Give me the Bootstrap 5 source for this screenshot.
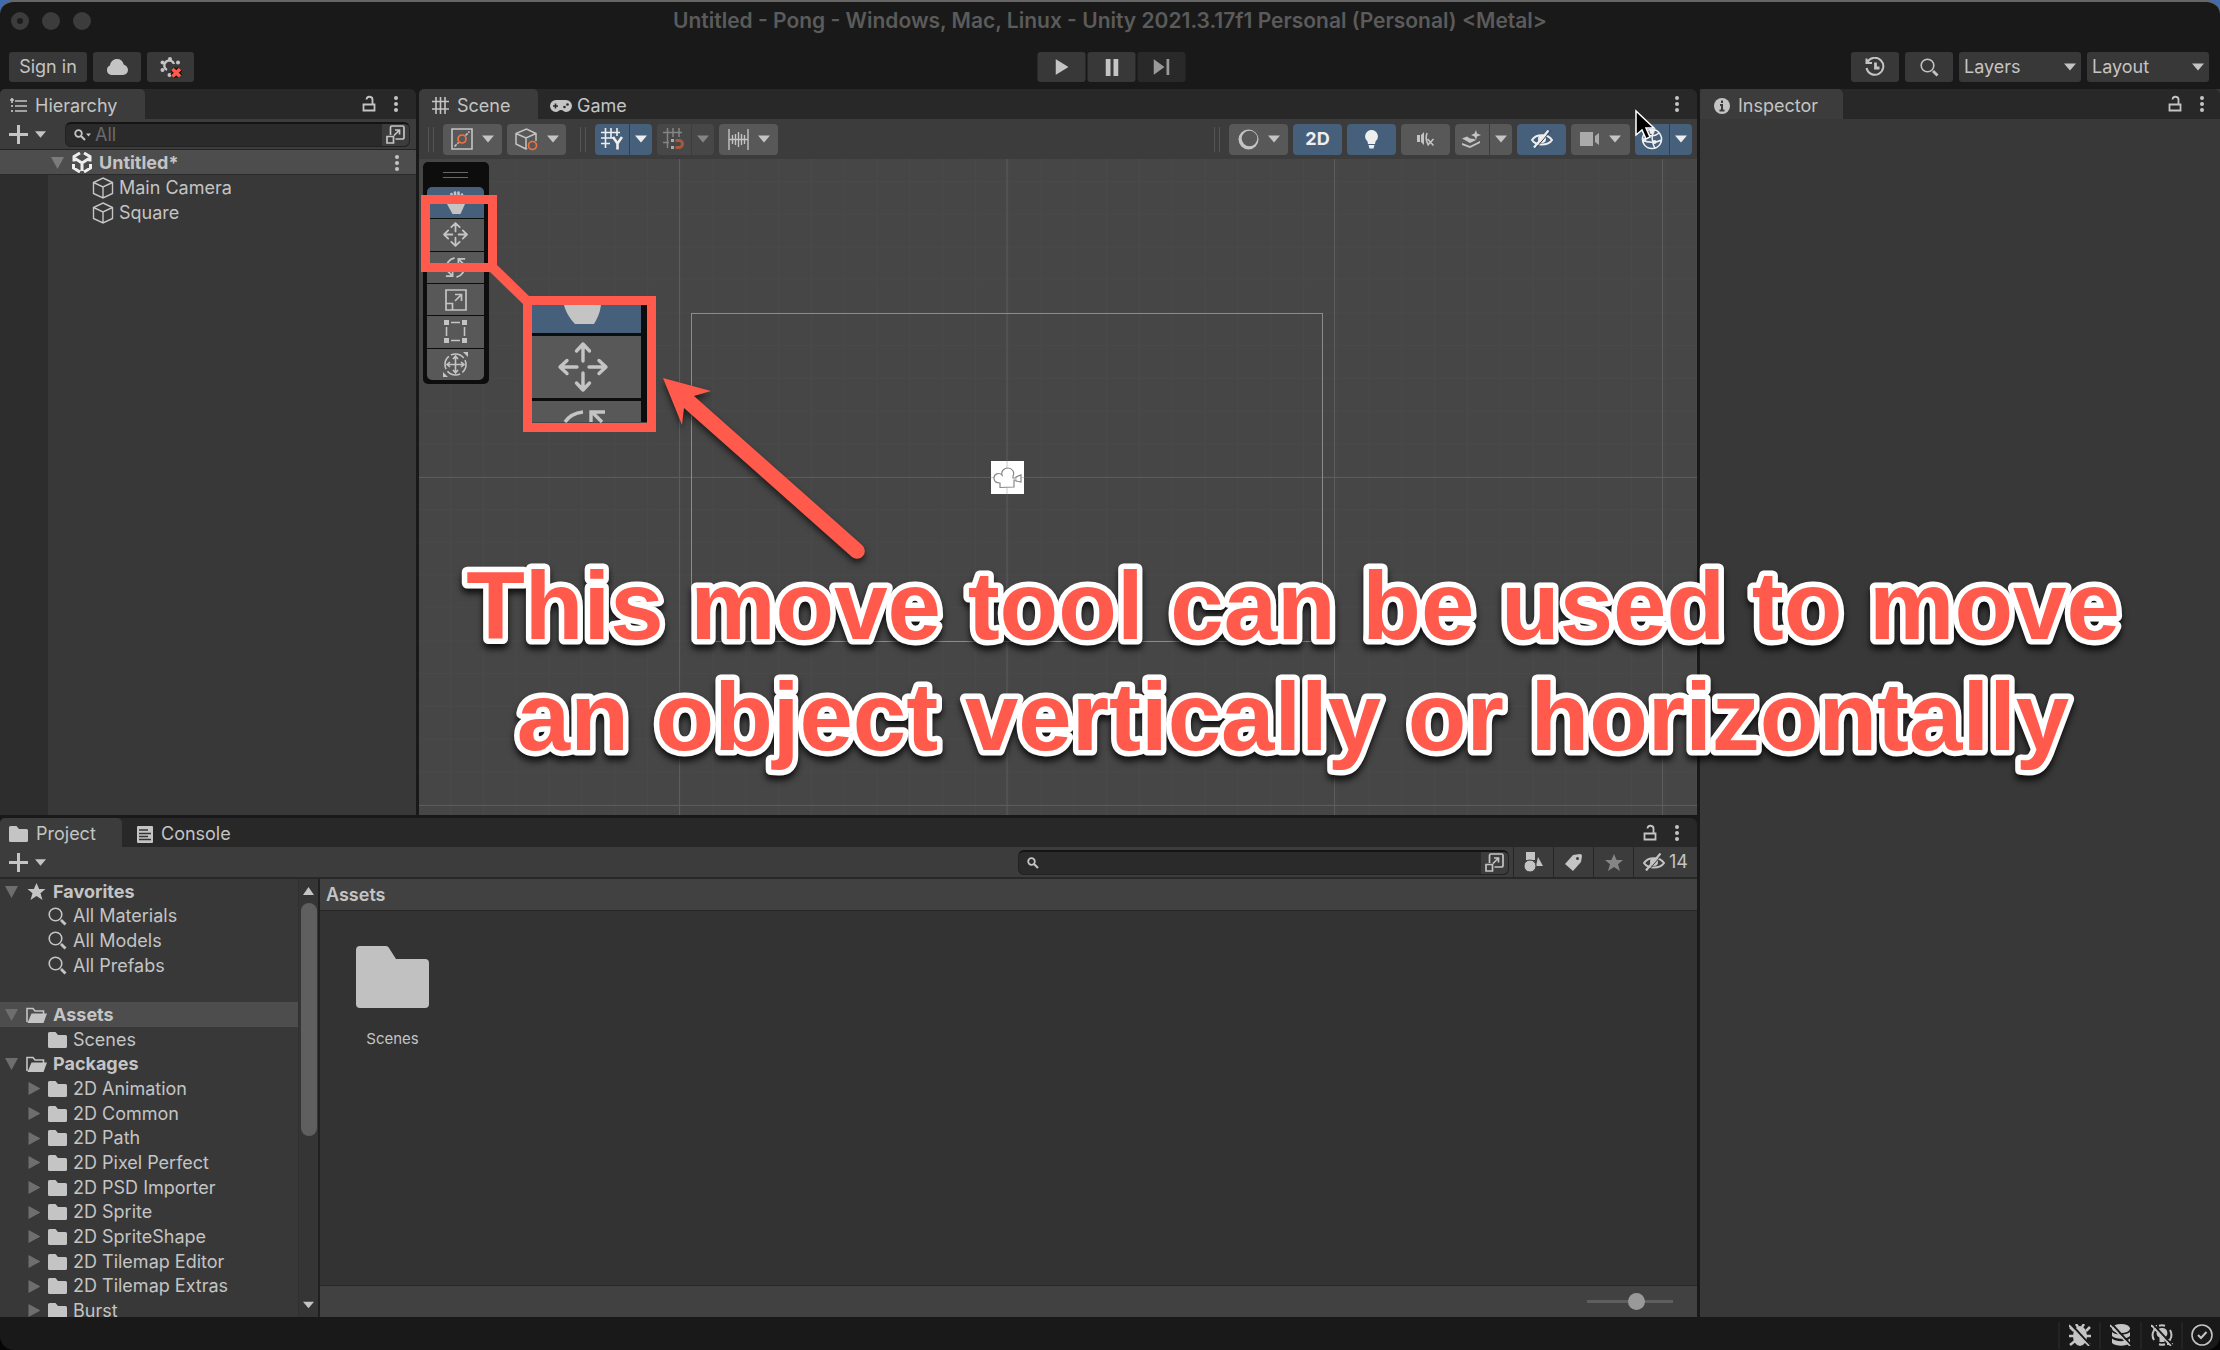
<!DOCTYPE html>
<html lang="en" data-bs-theme="dark">
<head>
<meta charset="utf-8">
<meta name="viewport" content="width=device-width, initial-scale=1">
<title>Untitled - Pong - Unity</title>
<link href="https://cdn.jsdelivr.net/npm/bootstrap@5.3.0/dist/css/bootstrap.min.css" rel="stylesheet">
<style>
:root { --line:#191919; --strip:#282828; --bar:#3c3c3c; --panel:#383838; --ink:#c4c4c4; --blue:#46607c; --mark:#ff5a4b; }
body { font-family: Inter, "Liberation Sans", sans-serif; font-size: 18px; line-height: 24px; color: var(--ink); background: linear-gradient(#3f6db0 50%, #050505 50%); overflow: hidden; }
button, select, input { font: inherit; color: inherit; }
svg { display: block; flex: none; }
.app-window { background: var(--line); border-top: 2px solid #666; border-radius: 14px; overflow: hidden; }
.title-strip { height: 42px; color: #5b5b5b; font-weight: 600; font-size: 21px; padding-bottom: 5px; }
.traffic { left: 11px; top: 10px; gap: 13px; }
.traffic i { width: 18px; height: 18px; border-radius: 50%; background: #3c3c3c; display: block; }
.traffic i:first-child { border: 6px solid #3c3c3c; background: #1d1d1d; }
.app-bar { height: 45px; padding: 8px 11px 7px 9px; }
.bar-set { gap: 6px; }
.play-set { gap: 2px; padding-left: 3px; }
.flat { border: 0; border-radius: 3px; background: #383838; display: flex; align-items: center; justify-content: center; height: 30px; padding: 0; }
.flat.dim { background: #292929; color: #999; }
.w46 { width: 47px; } .w48 { width: 48px; } .w78 { width: 78px; }
.pick { position: relative; width: 122px; }
.pick select { appearance: none; border: 0; border-radius: 3px; background: #383838; width: 100%; height: 30px; padding: 0 28px 0 5px; }
.pick svg { position: absolute; right: 5px; top: 11px; pointer-events: none; }
.split { gap: 3px; min-height: 0; min-width: 0; }
.tab-strip { height: 30px; background: var(--strip); border-radius: 6px 6px 0 0; flex: none; }
.tab-strip .pane-tab { color: inherit; text-decoration: none; height: 30px; display: flex; align-items: center; gap: 8px; padding-top: 3px; border-radius: 5px 5px 0 0; }
.pane-tab.on { background: var(--bar); }
.lower .tab-strip, .lower .pane-tab { height: 29px; }
.bare { border: 0; background: none; padding: 0; display: flex; align-items: center; justify-content: center; }
.bare.add { gap: 7px; }
.bare.more { margin: 0 17px; }
.side .bare.more { margin: 0 15px 0 17px; }
.hier { width: 416px; }
.side { width: 520px; background: var(--panel); }
.hier-bar { height: 31px; background: var(--bar); border-bottom: 1px solid #232323; padding: 0 6px 0 9px; gap: 19px; }
.finder { height: 25px; border-radius: 6px; background: #2a2a2a; border: 1px solid #222; border-top: 2px solid #141414; overflow: hidden; }
.finder input { border: 0; background: none; outline: 0; min-width: 0; padding: 0; height: 22px; }
.finder input::placeholder { color: #6b6b6b; opacity: 1; }
.finder .bare { width: 27px; background: var(--bar); align-self: stretch; }
.gutter { width: 48px; background: #2d2d2d; }
.root-row { height: 25px; background: #4d4d4d; border-bottom: 1px solid #2a2a2a; padding: 1px 16px 0 51px; font-weight: 700; }
.root-row .logo { margin: 0 7px 0 8px; }
.hier-list li { height: 25px; padding-left: 44px; gap: 5px; }
.scene-bar { height: 40px; background: var(--bar); padding: 0 5px 0 9px; gap: 5px; flex: none; }
.grip { width: 6px; height: 25px; border: solid #555; border-width: 0 1px; }
.tool { height: 31px; border: 0; border-radius: 4px; background: #585858; padding: 0; display: flex; align-items: center; justify-content: center; }
.tool.w { width: 59px; gap: 9px; }
.tool.m { width: 49px; }
.tool.l { width: 34px; border-radius: 4px 0 0 4px; }
.tool.r { width: 22px; border-radius: 0 4px 4px 0; margin-left: -4px; }
.tool.b { background: var(--blue); color: #eee; }
.tool.off { background: #474747; color: #858585; }
.tool.last { margin-right: 9px; }
.viewport { background: #464646; min-height: 0; }
.palette { left: 4px; top: 3px; width: 66px; padding: 10px 5px 4px 4px; background: #0d0d0d; border-radius: 5px; }
.palette hr { width: 25px; height: 6px; margin: 0 auto 9px; border: solid #686868; border-width: 1px 0; opacity: 1; }
.palette-grid { display: grid; grid-template-rows: repeat(6, 1fr); gap: 1px; height: 193px; border-radius: 5px; overflow: hidden; }
.palette-grid button { border: 0; padding: 0; background: #585858; display: flex; align-items: center; justify-content: center; }
.palette-grid .b { background: var(--blue); }
.lower { flex: 0 0 499px; min-height: 0; }
.proj-bar { height: 32px; background: var(--bar); border-bottom: 2px solid #282828; padding-left: 9px; flex: none; }
.proj-bar .finder { width: 491px; }
.proj-bar .cell { width: 40px; align-self: stretch; border-left: 1px solid #252525; }
.proj-bar .cell.wide { width: 64px; gap: 4px; }
.tree { width: 298px; background: var(--panel); overflow: hidden; }
.tree li { height: 25px; gap: 6px; padding-left: 5px; flex: none; }
.tree li:nth-child(3n+2) { height: 24px; }
.tree li.kid { padding-left: 48px; }
.tree li.pkg { padding-left: 28px; }
.tree li.top { font-weight: 700; }
.tree li.top .ar { margin-right: 2px; }
.tree li.sel { background: #4d4d4d; }
.tree .ar { color: #6e6e6e; }
.rail { width: 22px; background: #353535; border-left: 1px solid #303030; border-right: 2px solid #202020; padding: 8px 0; }
.rail .thumb { width: 16px; height: 233px; margin-top: 8px; border-radius: 8px; background: #5f5f5f; }
.crumbs { height: 32px; background: #414141; border-bottom: 1px solid #252525; padding-left: 6px; font-weight: 600; }
.files { background: #333; padding: 35px 0 0 22px; }
.file { width: 101px; font-size: 15px; }
.file svg { margin-bottom: 19px; }
.zoom-bar { height: 32px; background: #414141; border-top: 1px solid #282828; padding-right: 24px; }
.zoom-bar input { width: 86px; height: 17px; appearance: none; background: linear-gradient(#5e5e5e, #5e5e5e) center/100% 3px no-repeat; }
.zoom-bar input::-webkit-slider-thumb { appearance: none; width: 17px; height: 17px; border-radius: 50%; background: #999; }
.status { height: 33px; padding-top: 3px; }
.status .bare { width: 41px; height: 27px; border-left: 2px solid #232323; }
.status .bare:last-child { width: 39px; }
.overlay { left: 0; top: 0; pointer-events: none; z-index: 5; }
.callout { font: 700 96px "Liberation Sans", Arial, sans-serif; fill: var(--mark); stroke: #fff; stroke-width: 11px; stroke-linejoin: round; paint-order: stroke fill; text-anchor: middle; filter: drop-shadow(0 5px 3px rgba(0,0,0,.75)); }
</style>
<script src="https://cdn.jsdelivr.net/npm/bootstrap@5.3.0/dist/js/bootstrap.bundle.min.js"></script>
</head>
<body>
<svg width="0" height="0" class="position-absolute" aria-hidden="true">
  <symbol id="dn" viewBox="0 0 12 7"><path d="M0 0h12L6 7z" fill="currentColor"/></symbol>
  <symbol id="dots" viewBox="0 0 6 18"><g fill="currentColor"><circle cx="3" cy="3" r="2"/><circle cx="3" cy="9" r="2"/><circle cx="3" cy="15" r="2"/></g></symbol>
  <symbol id="lock" viewBox="0 0 14 18"><path d="M1.500 9.500h11v6h-11zM10.500 9V5a3 3 0 0 0-6-.5" fill="none" stroke="currentColor" stroke-width="1.800"/></symbol>
  <symbol id="plus" viewBox="0 0 19 19"><path d="M9.500 0v19M0 9.500h19" stroke="currentColor" stroke-width="3"/></symbol>
  <symbol id="mag" viewBox="0 0 19 19"><circle cx="7.500" cy="7.500" r="6.300" fill="none" stroke="currentColor" stroke-width="1.600"/><path d="M13 13l4.500 4.500" stroke="currentColor" stroke-width="2.800"/></symbol>
  <symbol id="smag" viewBox="0 0 12 12"><circle cx="4.500" cy="4.500" r="3.300" fill="none" stroke="currentColor" stroke-width="1.800"/><path d="M7 7l4 4" stroke="currentColor" stroke-width="2.200"/></symbol>
  <symbol id="popout" viewBox="0 0 19 19"><g fill="none" stroke="currentColor" stroke-width="1.700"><path d="M4.500 10V2.500a1.500 1.500 0 0 1 1.500-1.500h10.500a1.500 1.500 0 0 1 1.500 1.500v10a1.500 1.500 0 0 1-1.500 1.500H9.500M1 11.500h6.500V18H1zM8 10.500l5.500-5.500M9 5h4.500v4.500"/></g></symbol>
  <symbol id="cube" viewBox="0 0 22 22"><path d="M11 1l9.500 4.500v11L11 21l-9.500-4.500v-11zM1.500 5.500L11 10l9.500-4.500M11 10v11" fill="none" stroke="currentColor" stroke-width="1.400"/></symbol>
  <symbol id="folder" viewBox="0 0 19 16"><path d="M1.500 0h6L10 3h7.500A1.500 1.500 0 0 1 19 4.500v10a1.500 1.500 0 0 1-1.500 1.500h-16A1.500 1.500 0 0 1 0 14.500v-13A1.500 1.500 0 0 1 1.500 0z" fill="currentColor"/></symbol>
  <symbol id="open" viewBox="0 0 21 16"><path d="M1 15V1.500h6L9 4h8.500v3" fill="none" stroke="currentColor" stroke-width="1.600"/><path d="M5.500 6.500H21L17.500 16H1.500z" fill="currentColor"/></symbol>
  <symbol id="star" viewBox="0 0 18 17"><path d="M9 0l2.600 6H18l-5 4.200L15 17l-6-4-6 4 2-6.800L0 6h6.400z" fill="currentColor"/></symbol>
  <symbol id="ad" viewBox="0 0 13 12"><path d="M0 0h13L6.500 12z" fill="currentColor"/></symbol>
  <symbol id="arr" viewBox="0 0 13 13"><path d="M0 0v13l12-6.500z" fill="currentColor"/></symbol>
  <symbol id="hide" viewBox="0 0 22 18"><path d="M1 10c4-6.500 16-6.500 20 0-4 6-16 6-20 0z" fill="none" stroke="currentColor" stroke-width="2"/><circle cx="11" cy="9" r="4" fill="currentColor"/><path d="M3 17.500L17.500 .5" stroke="currentColor" stroke-width="2.200"/><path d="M5.500 17.500L20 .5" stroke="#3c3c3c" stroke-width="1"/></symbol>
  <symbol id="move" viewBox="0 0 24 24"><path d="M12 9V1.500M8 5l4-4 4 4M12 15v7.500M8 19l4 4 4-4M9 12H1.500M5 8l-4 4 4 4M15 12h7.500M19 8l4 4-4 4" fill="none" stroke="currentColor" stroke-width="1.700" stroke-linecap="round" stroke-linejoin="round"/></symbol>
  <symbol id="hand" viewBox="0 0 24 24"><g stroke="currentColor" stroke-width="2.600" stroke-linecap="round"><path d="M7.500 10V3M11 9V1.500M14.500 9V1.500M18 10V3.500"/></g><path d="M3 13h18l-4.500 10h-8z" fill="currentColor"/></symbol>
  <symbol id="rot" viewBox="0 0 24 24"><path d="M3 15C2 8 5.500 3.500 11 2M21 9c1 7-2.500 11.500-8 13M15 11V3h7M15.500 3.500l6 6M9 13v8H2M8.500 20.500l-6-6" fill="none" stroke="currentColor" stroke-width="1.800"/></symbol>
</svg>

<div class="app-window d-flex flex-column vh-100 position-relative">
  <div class="title-strip d-flex align-items-center justify-content-center position-relative">
    <div class="traffic position-absolute d-flex"><i></i><i></i><i></i></div>
    <span>Untitled - Pong - Windows, Mac, Linux - Unity 2021.3.17f1 Personal (Personal) &lt;Metal&gt;</span>
  </div>
  <header class="app-bar d-flex align-items-center position-relative">
    <div class="bar-set d-flex">
      <button class="flat w78">Sign in</button>
      <button class="flat w48" aria-label="Cloud"><svg width="22" height="16" viewBox="0 0 22 16"><path d="M5 16a5 5 0 0 1-1-9.500C4.500 2.500 7.500 0 11 0c3.500 0 6 2 6.700 5.500C20.500 6.500 22 8.500 22 11a5 5 0 0 1-5 5z" fill="currentColor"/></svg></button>
      <button class="flat w46" aria-label="Collaboration"><svg width="22" height="22" viewBox="0 0 22 22"><g fill="currentColor"><circle cx="10" cy="3" r="2"/><circle cx="2.500" cy="6.500" r="2"/><circle cx="18" cy="6.500" r="2"/><circle cx="2.500" cy="14" r="2"/><circle cx="9.500" cy="19" r="2"/></g><path d="M7 14a5 5 0 1 1 7-6" fill="none" stroke="currentColor" stroke-width="2.400"/><path d="M12.500 13l7.500 7.500m0-7.500l-7.500 7.500" stroke="#111" stroke-width="6"/><path d="M12.500 13l7.500 7.500m0-7.500l-7.500 7.500" stroke="#ff5a4b" stroke-width="3.600"/></svg></button>
    </div>
    <div class="play-set position-absolute start-50 translate-middle-x d-flex">
      <button class="flat w48" aria-label="Play"><svg width="13" height="16" viewBox="0 0 13 16"><path d="M0 0l13 8-13 8z" fill="currentColor"/></svg></button>
      <button class="flat w48" aria-label="Pause"><svg width="13" height="17" viewBox="0 0 13 17"><path d="M0 0h5v17H0zM8 0h5v17H8z" fill="currentColor"/></svg></button>
      <button class="flat w48 dim" aria-label="Step"><svg width="16" height="16" viewBox="0 0 16 16"><path d="M0 0l11 8-11 8zM13 0h3v16h-3z" fill="currentColor"/></svg></button>
    </div>
    <div class="bar-set d-flex ms-auto">
      <button class="flat w48" aria-label="History"><svg width="20" height="20" viewBox="0 0 20 20"><path d="M2.500 5a8.500 8.500 0 1 1-1 6M1.500 1.500V6H7" fill="none" stroke="currentColor" stroke-width="2"/><path d="M10.500 5.500v5.500h4" fill="none" stroke="currentColor" stroke-width="2.800"/></svg></button>
      <button class="flat w48" aria-label="Search"><svg width="19" height="19"><use href="#mag"/></svg></button>
      <div class="pick"><select aria-label="Layers"><option>Layers</option></select><svg width="12" height="8"><use href="#dn"/></svg></div>
      <div class="pick"><select aria-label="Layout"><option>Layout</option></select><svg width="12" height="8"><use href="#dn"/></svg></div>
    </div>
  </header>

  <main class="split d-flex flex-fill">
    <div class="split d-flex flex-column flex-fill">
      <div class="split d-flex flex-fill">
        <section class="hier d-flex flex-column flex-shrink-0">
          <div class="tab-strip d-flex align-items-center">
            <a href="#" class="pane-tab on" style="padding-left:10px;width:145px"><svg width="17" height="15" viewBox="0 0 17 15"><path d="M5 3h12M5 8h12M5 13h12M2 0v5M0 2h4M2 7v2M2 12v2" stroke="currentColor" stroke-width="1.700"/></svg>Hierarchy</a>
            <button class="bare ms-auto" aria-label="Lock"><svg width="14" height="18"><use href="#lock"/></svg></button>
            <button class="bare more" aria-label="Menu"><svg width="6" height="18"><use href="#dots"/></svg></button>
          </div>
          <div class="hier-bar d-flex align-items-center flex-shrink-0">
            <button class="bare add" aria-label="Create"><svg width="19" height="19"><use href="#plus"/></svg><svg width="11" height="7"><use href="#dn"/></svg></button>
            <div class="finder d-flex align-items-center flex-fill">
              <svg width="12" height="12" class="ms-2"><use href="#smag"/></svg><svg width="5" height="4"><use href="#dn"/></svg>
              <input class="flex-fill ms-1" placeholder="All" aria-label="Search hierarchy">
              <button class="bare" aria-label="Picker"><svg width="19" height="19"><use href="#popout"/></svg></button>
            </div>
          </div>
          <div class="root-row d-flex align-items-center flex-shrink-0">
            <svg width="13" height="12" style="color:#7b7b7b"><use href="#ad"/></svg>
            <svg class="logo" width="20" height="21" viewBox="0 0 20 21"><path d="M8 1L2 4.500v5M12 1l6 3.500v5M1.500 12v4L8 20M18.500 12v4L12 20M10 11v8M10 11L3 6.500M10 11l7-4.500M10 11" fill="none" stroke="#eee" stroke-width="3"/></svg>
            <span>Untitled*</span><svg class="ms-auto" width="6" height="18"><use href="#dots"/></svg>
          </div>
          <div class="d-flex flex-fill" style="background:var(--panel)">
            <div class="gutter"></div>
            <ul class="hier-list list-unstyled m-0">
              <li class="d-flex align-items-center"><svg width="22" height="22"><use href="#cube"/></svg>Main Camera</li>
              <li class="d-flex align-items-center"><svg width="22" height="22"><use href="#cube"/></svg>Square</li>
            </ul>
          </div>
        </section>

        <section class="d-flex flex-column flex-fill" style="min-width:0">
          <div class="tab-strip d-flex align-items-center">
            <a href="#" class="pane-tab on" style="padding-left:13px;width:119px"><svg width="17" height="17" viewBox="0 0 17 17"><path d="M4 0v17M8.500 0v17M13 0v17M0 4.500h17M0 12h17" stroke="currentColor" stroke-width="1.600"/></svg>Scene</a>
            <a href="#" class="pane-tab" style="padding-left:12px;gap:5px"><svg width="22" height="12" viewBox="0 0 22 12"><path d="M6 0h10a6 6 0 0 1 0 12c-2 0-3-2-5-2s-3 2-5 2A6 6 0 0 1 6 0z" fill="currentColor"/><path d="M3 6h5M5.500 3.500v5" stroke="#282828" stroke-width="1.600"/><circle cx="14.500" cy="7" r="1.300" fill="#282828"/><circle cx="17.500" cy="4.500" r="1.300" fill="#282828"/></svg>Game</a>
            <button class="bare more ms-auto" aria-label="Menu"><svg width="6" height="18"><use href="#dots"/></svg></button>
          </div>
          <div class="scene-bar d-flex align-items-center">
            <span class="grip me-1"></span>
            <button class="tool w" aria-label="Pivot"><svg width="22" height="22" viewBox="0 0 22 22"><path d="M1 1h20v20H1z" fill="none" stroke="currentColor" stroke-width="1.600"/><path d="M3.500 18.500l4-4M14.500 7.500l4-4" stroke="currentColor" stroke-width="1.600" stroke-dasharray="3 1"/><circle cx="11" cy="11" r="4" fill="none" stroke="#f0713f" stroke-width="1.700"/></svg><svg width="12" height="8"><use href="#dn"/></svg></button>
            <button class="tool w last" aria-label="Orientation"><svg width="23" height="23" viewBox="0 0 23 23"><path d="M12 20l-1 1-10-5V5.500L11.500 1 21 5.500V13M1 5.500L11 10l10-4.500M11 10v11" fill="none" stroke="currentColor" stroke-width="1.500"/><circle cx="17.500" cy="17.500" r="4" fill="none" stroke="#f0713f" stroke-width="1.700"/></svg><svg width="12" height="8"><use href="#dn"/></svg></button>
            <span class="grip me-1"></span>
            <button class="tool l b" aria-label="Grid"><svg width="22" height="22" viewBox="0 0 22 22"><path d="M4.500 0v20M10 0v10M16 0v8M0 4.500h19M0 10h12M0 15.500h9" stroke="currentColor" stroke-width="1.600"/><path d="M12 9l4.500 6.500L21 9M16.500 15v6.500" fill="none" stroke="currentColor" stroke-width="2.600"/></svg></button><button class="tool r b" aria-label="Grid menu"><svg width="12" height="8"><use href="#dn"/></svg></button>
            <button class="tool l off" aria-label="Snap"><svg width="22" height="22" viewBox="0 0 22 22"><path d="M4.500 0v20M10 0v9M16 0v9M0 4.500h19M0 14.500h6" stroke="currentColor" stroke-width="1.500"/><path d="M8 12.500h3M8 19.500h3" stroke="#aaa" stroke-width="3"/><path d="M12.500 12.500H16a3.500 3.500 0 0 1 0 7h-3.500" fill="none" stroke="#a8583e" stroke-width="3"/></svg></button><button class="tool r off" aria-label="Snap menu"><svg width="12" height="8"><use href="#dn"/></svg></button>
            <button class="tool w" aria-label="Increment"><svg width="21" height="21" viewBox="0 0 21 21"><path d="M1 0v21M20 0v21M10.500 3v15M4.500 6v9M7.500 5v11M13.500 5v11M16.500 6v9M1 10.500h19" stroke="currentColor" stroke-width="1.400"/></svg><svg width="12" height="8"><use href="#dn"/></svg></button>
            <span class="grip ms-auto me-1"></span>
            <button class="tool w" aria-label="Shading"><svg width="21" height="21" viewBox="0 0 21 21"><circle cx="10.500" cy="10.500" r="10" fill="currentColor"/><circle cx="11.500" cy="9.500" r="7.800" fill="#585858"/></svg><svg width="12" height="8"><use href="#dn"/></svg></button>
            <button class="tool m b fw-bold">2D</button>
            <button class="tool m b" aria-label="Light"><svg width="13" height="19" viewBox="0 0 13 19"><path d="M6.500 0a6.500 6.500 0 0 1 4 11.500L10 14H3l-.5-2.500A6.500 6.500 0 0 1 6.500 0zM3.500 15h6l-1 3.500h-4z" fill="currentColor"/></svg></button>
            <button class="tool m" aria-label="Audio"><svg width="18" height="16" viewBox="0 0 18 16"><path d="M0 4h3v7H0zM4 4l3-3v13l-3-3z" fill="currentColor"/><path d="M10 2c-1 3-1 8 1 11M10.500 8l6 6.500m0-6.500l-6 6.500" fill="none" stroke="currentColor" stroke-width="1.600"/></svg></button>
            <button class="tool l" aria-label="Effects"><svg width="20" height="18" viewBox="0 0 20 18"><path d="M0 8.500l5-2 3 2 4 .5 2 1-6 3zM0 13l8 3 10-5v2l-10 5-8-3zM14 0l1 3.500L19 5l-4 1.500L14 10l-1.500-3.500L9 5l3.500-1.500z" fill="currentColor"/></svg></button><button class="tool r" aria-label="Effects menu"><svg width="12" height="8"><use href="#dn"/></svg></button>
            <button class="tool m b" aria-label="Visibility"><svg width="22" height="18"><use href="#hide"/></svg></button>
            <button class="tool w" aria-label="Camera"><svg width="20" height="14" viewBox="0 0 20 14"><path d="M0 0h13v14H0zM15 4l4-3v12l-4-3z" fill="#aaa"/></svg><svg width="12" height="8"><use href="#dn"/></svg></button>
            <button class="tool l b" aria-label="Gizmos"><svg width="22" height="22" viewBox="0 0 22 22"><path d="M11 1.500a9.500 9.500 0 1 0 .01 0M1.500 12c5 3 14 3 19 0M13 1.500c-3 5-2 14 1 19M3 6c5 3 12 2 15-1" fill="none" stroke="currentColor" stroke-width="1.500"/><circle cx="11" cy="3.500" r="2.500" fill="currentColor"/><circle cx="3" cy="12" r="2" fill="currentColor"/><circle cx="13.500" cy="14" r="2" fill="currentColor"/></svg></button><button class="tool r b" aria-label="Gizmos menu"><svg width="12" height="8"><use href="#dn"/></svg></button>
          </div>
          <div class="viewport flex-fill position-relative overflow-hidden">
            <svg class="position-absolute" width="100%" height="100%">
              <defs><pattern id="minor" x="31" y="22" width="32.800" height="32.800" patternUnits="userSpaceOnUse"><path d="M.5 0v33M0 .5h33" stroke="#494949"/></pattern></defs>
              <rect width="100%" height="100%" fill="url(#minor)"/>
              <path d="M260.500 0v700M588 0v700M915.500 0v700M1243.500 0v700M0 318.500h1300M0 646.500h1300" stroke="#5c5c5c"/>
              <rect x="272.500" y="154.500" width="631" height="328" fill="none" stroke="#8b8b8b"/>
              <path d="M572 302h33v33h-33z" fill="#fff"/>
              <path d="M588 302v8M588 329v6M572 318.500h4M602 318.500h3" stroke="#ccc"/>
              <path d="M581 328.500V324c-4 0-6-2-6-5 0-4 5-6 8-3-1-4 2-7 6-7s7 4 5 8v2h3v-1l5-2v7l-5-1v-1h-2v7z" fill="#fff" stroke="#888" stroke-width="1.200"/>
            </svg>
            <div class="palette position-absolute">
              <hr>
              <div class="palette-grid">
                <button class="b" aria-label="Hand"><svg width="24" height="24"><use href="#hand"/></svg></button>
                <button aria-label="Move"><svg width="25" height="25"><use href="#move"/></svg></button>
                <button aria-label="Rotate"><svg width="23" height="23"><use href="#rot"/></svg></button>
                <button aria-label="Scale"><svg width="22" height="22" viewBox="0 0 22 22"><path d="M1 1h20v20H1zM1 14.500h6.500V21M10 12l6.500-6.500M10 5.500h6.500V12" fill="none" stroke="currentColor" stroke-width="1.700"/></svg></button>
                <button aria-label="Rect"><svg width="23" height="23" viewBox="0 0 23 23"><path d="M0 0h5v5H0zM18 0h5v5h-5zM0 18h5v5H0zM18 18h5v5h-5z" fill="currentColor"/><path d="M7 2.500h9M7 20.500h9M2.500 7v9M20.500 7v9" stroke="currentColor" stroke-width="1.600"/></svg></button>
                <button aria-label="Transform"><svg width="25" height="25" viewBox="0 0 25 25"><circle cx="12.500" cy="12.500" r="10.500" fill="none" stroke="currentColor" stroke-width="1.600" stroke-dasharray="14 2.500" stroke-dashoffset="5"/><path d="M12.500 4v17M4 12.500h17M10 7l2.500-3L15 7M10 18l2.500 3 2.500-3M7 10l-3 2.500L7 15M18 10l3 2.500-3 2.500" fill="none" stroke="currentColor" stroke-width="1.600"/><path d="M20 0h5v5zM0 20v5h5z" fill="currentColor"/></svg></button>
              </div>
            </div>
          </div>
        </section>
      </div>

      <section class="lower d-flex flex-column">
        <div class="tab-strip d-flex align-items-center">
          <a href="#" class="pane-tab on" style="padding-left:9px;width:122px"><svg width="19" height="16"><use href="#folder"/></svg>Project</a>
          <a href="#" class="pane-tab" style="padding-left:15px"><svg width="16" height="17" viewBox="0 0 16 17"><path d="M1 0h14a1 1 0 0 1 1 1v15a1 1 0 0 1-1 1H1a1 1 0 0 1-1-1V1a1 1 0 0 1 1-1z" fill="currentColor"/><path d="M2 4h9M2 7.500h12M2 10.500h9M2 13.500h12" stroke="#333" stroke-width="1.300"/></svg>Console</a>
          <button class="bare ms-auto" aria-label="Lock"><svg width="14" height="18"><use href="#lock"/></svg></button>
          <button class="bare more" aria-label="Menu"><svg width="6" height="18"><use href="#dots"/></svg></button>
        </div>
        <div class="proj-bar d-flex align-items-center">
          <button class="bare add" aria-label="Create"><svg width="19" height="19"><use href="#plus"/></svg><svg width="11" height="7"><use href="#dn"/></svg></button>
          <div class="finder d-flex align-items-center ms-auto me-1">
            <svg width="12" height="12" class="ms-2"><use href="#smag"/></svg>
            <input class="flex-fill ms-2" aria-label="Search project">
            <button class="bare" aria-label="Picker"><svg width="19" height="19"><use href="#popout"/></svg></button>
          </div>
          <button class="bare cell" aria-label="By type"><svg width="19" height="20" viewBox="0 0 19 20"><path d="M2 0h9v8H2zM14 5l5 9h-7z" fill="currentColor"/><circle cx="6" cy="14" r="6" fill="currentColor" stroke="#3c3c3c"/></svg></button>
          <button class="bare cell" aria-label="By label"><svg width="17" height="17" viewBox="0 0 17 17"><path d="M8 1l7-1a2 2 0 0 1 2 2l-1 6-8 9-8-7z" fill="currentColor"/><circle cx="12.500" cy="4.500" r="1.500" fill="#3c3c3c"/></svg></button>
          <button class="bare cell" aria-label="Favorite" style="color:#858585"><svg width="18" height="17"><use href="#star"/></svg></button>
          <button class="bare cell wide"><svg width="22" height="18"><use href="#hide"/></svg>14</button>
        </div>
        <div class="split d-flex flex-fill gap-0">
          <ul class="tree list-unstyled m-0 d-flex flex-column flex-shrink-0">
            <li class="top d-flex align-items-center"><svg class="ar" width="13" height="12"><use href="#ad"/></svg><svg width="21" height="17"><use href="#star"/></svg>Favorites</li>
            <li class="kid d-flex align-items-center"><svg width="19" height="19"><use href="#mag"/></svg>All Materials</li>
            <li class="kid d-flex align-items-center"><svg width="19" height="19"><use href="#mag"/></svg>All Models</li>
            <li class="kid d-flex align-items-center"><svg width="19" height="19"><use href="#mag"/></svg>All Prefabs</li>
            <li></li>
            <li class="top sel d-flex align-items-center"><svg class="ar" width="13" height="12"><use href="#ad"/></svg><svg width="21" height="16"><use href="#open"/></svg>Assets</li>
            <li class="kid d-flex align-items-center"><svg width="19" height="16"><use href="#folder"/></svg>Scenes</li>
            <li class="top d-flex align-items-center"><svg class="ar" width="13" height="12"><use href="#ad"/></svg><svg width="21" height="16"><use href="#open"/></svg>Packages</li>
            <li class="pkg d-flex align-items-center"><svg class="ar" width="14" height="13"><use href="#arr"/></svg><svg width="19" height="16"><use href="#folder"/></svg>2D Animation</li>
            <li class="pkg d-flex align-items-center"><svg class="ar" width="14" height="13"><use href="#arr"/></svg><svg width="19" height="16"><use href="#folder"/></svg>2D Common</li>
            <li class="pkg d-flex align-items-center"><svg class="ar" width="14" height="13"><use href="#arr"/></svg><svg width="19" height="16"><use href="#folder"/></svg>2D Path</li>
            <li class="pkg d-flex align-items-center"><svg class="ar" width="14" height="13"><use href="#arr"/></svg><svg width="19" height="16"><use href="#folder"/></svg>2D Pixel Perfect</li>
            <li class="pkg d-flex align-items-center"><svg class="ar" width="14" height="13"><use href="#arr"/></svg><svg width="19" height="16"><use href="#folder"/></svg>2D PSD Importer</li>
            <li class="pkg d-flex align-items-center"><svg class="ar" width="14" height="13"><use href="#arr"/></svg><svg width="19" height="16"><use href="#folder"/></svg>2D Sprite</li>
            <li class="pkg d-flex align-items-center"><svg class="ar" width="14" height="13"><use href="#arr"/></svg><svg width="19" height="16"><use href="#folder"/></svg>2D SpriteShape</li>
            <li class="pkg d-flex align-items-center"><svg class="ar" width="14" height="13"><use href="#arr"/></svg><svg width="19" height="16"><use href="#folder"/></svg>2D Tilemap Editor</li>
            <li class="pkg d-flex align-items-center"><svg class="ar" width="14" height="13"><use href="#arr"/></svg><svg width="19" height="16"><use href="#folder"/></svg>2D Tilemap Extras</li>
            <li class="pkg d-flex align-items-center"><svg class="ar" width="14" height="13"><use href="#arr"/></svg><svg width="19" height="16"><use href="#folder"/></svg>Burst</li>
          </ul>
          <div class="rail d-flex flex-column align-items-center flex-shrink-0">
            <svg width="11" height="8" viewBox="0 0 11 8"><path d="M0 8h11L5.500 0z" fill="currentColor"/></svg>
            <div class="thumb"></div>
            <svg class="mt-auto" width="11" height="8"><use href="#dn"/></svg>
          </div>
          <div class="d-flex flex-column flex-fill">
            <div class="crumbs d-flex align-items-center">Assets</div>
            <div class="files flex-fill">
              <div class="file d-flex flex-column align-items-center">
                <svg width="73" height="62" viewBox="0 0 73 62"><path d="M4 0h26q2 0 3 2l7 11h29a4 4 0 0 1 4 4v41a4 4 0 0 1-4 4H4a4 4 0 0 1-4-4V4a4 4 0 0 1 4-4z" fill="#c1c1c1"/></svg>
                Scenes
              </div>
            </div>
            <div class="zoom-bar d-flex align-items-center justify-content-end"><input type="range" min="0" max="100" value="60" aria-label="Icon size"></div>
          </div>
        </div>
      </section>
    </div>

    <aside class="side flex-shrink-0">
      <div class="tab-strip d-flex align-items-center">
        <a href="#" class="pane-tab on" style="padding-left:14px;width:143px"><svg width="16" height="16" viewBox="0 0 16 16"><circle cx="8" cy="8" r="8" fill="currentColor"/><path d="M8 2.500v2.600M6 7h2v5M5.500 12.500h5" fill="none" stroke="#3c3c3c" stroke-width="2"/></svg>Inspector</a>
        <button class="bare ms-auto" aria-label="Lock"><svg width="14" height="18"><use href="#lock"/></svg></button>
        <button class="bare more" aria-label="Menu"><svg width="6" height="18"><use href="#dots"/></svg></button>
      </div>
    </aside>
  </main>

  <footer class="status d-flex align-items-center justify-content-end flex-shrink-0">
    <button class="bare" aria-label="Debug"><svg width="22" height="22" viewBox="0 0 22 22"><ellipse cx="11" cy="12" rx="7" ry="10" fill="currentColor"/><path d="M1 3l4 4M21 3l-4 4M0 12h22M1 21l5-4M21 21l-5-4M7 0l2 3M15 0l-2 3" stroke="currentColor" stroke-width="2.500"/><path d="M2 0l20 22" stroke="#191919" stroke-width="2"/><path d="M0 1l20 21" stroke="currentColor" stroke-width="1.600"/></svg></button>
    <button class="bare" aria-label="Cache"><svg width="22" height="22" viewBox="0 0 22 22"><ellipse cx="11" cy="4.500" rx="9" ry="4.500" fill="currentColor"/><path d="M2 8c4 3.500 14 3.500 18 0v4c-4 3.500-14 3.500-18 0zM2 14.500c4 3.500 14 3.500 18 0V19c-4 3.500-14 3.500-18 0z" fill="currentColor"/><path d="M2 0l20 22" stroke="#191919" stroke-width="2"/><path d="M0 1l20 21" stroke="currentColor" stroke-width="1.600"/></svg></button>
    <button class="bare" aria-label="Auto lighting"><svg width="22" height="22" viewBox="0 0 22 22"><path d="M3 16A9.500 9.500 0 0 1 6 3M8 1.800a9.500 9.500 0 0 1 6 0M19 6a9.500 9.500 0 0 1-3 13M14 20.200a9.500 9.500 0 0 1-6 0M0 2h5v5M22 20h-5v-5" fill="none" stroke="currentColor" stroke-width="2"/><path d="M11 4a5 5 0 0 1 2.500 9.500V18h-5v-4.500A5 5 0 0 1 11 4z" fill="currentColor"/><path d="M2 0l20 22" stroke="#191919" stroke-width="2"/><path d="M0 1l20 21" stroke="currentColor" stroke-width="1.600"/></svg></button>
    <button class="bare" aria-label="Status"><svg width="22" height="22" viewBox="0 0 22 22"><circle cx="11" cy="11" r="10" fill="none" stroke="currentColor" stroke-width="1.600"/><path d="M7 11l3 3 5.500-6" fill="none" stroke="currentColor" stroke-width="2"/></svg></button>
  </footer>
</div>

<svg class="overlay position-absolute" width="2220" height="1350" viewBox="0 0 2220 1350">
  <g>
    <path d="M532 305h115v117H532z" fill="#0d0d0d"/>
    <path d="M532 305h109v28H532z" fill="#46607c"/>
    <path d="M532 336h109v62H532zM532 401h109v21H532z" fill="#585858"/>
    <path d="M564 305h37c-1 8-4 14-7 19h-19c-4-4-9-11-11-19z" fill="#c4c4c4"/>
    <g fill="none" stroke="#c4c4c4" stroke-width="3.400" stroke-linecap="round" stroke-linejoin="round"><path d="M583 361v-17M576.500 351l6.500-7 6.500 7M583 373v17M576.500 383l6.500 7 6.500-7M577 367h-17M567 360.500l-7 6.500 7 6.500M589 367h17M599 360.500l7 6.500-7 6.500"/></g>
    <path d="M565 422c4-6 9-9 18-10M591 422v-10h14M592 412l10 10" fill="none" stroke="#c4c4c4" stroke-width="3.400"/>
  </g>
  <g fill="none" stroke="#ff5a4b" stroke-width="9"><path d="M425.500 199.500h67v68h-67zM527.500 300.500h124v127h-124z"/><path d="M493 268l34 33" stroke-width="10"/></g>
  <path d="M663 378l48 13-17 5L862 545a7.500 7.500 0 0 1-10 12L684 408l-2 17z" fill="#ff5a4b" style="filter:drop-shadow(0 4px 3px rgba(0,0,0,.6))"/>
  <text class="callout"><tspan x="1293" y="639">This move tool can be used to move</tspan><tspan x="1293" y="750">an object vertically or horizontally</tspan></text>
  <path d="M1636 111v24l6-5 4 9 4-2-4-9h8z" fill="#000" stroke="#fff" stroke-width="1.500"/>
</svg>
</body>
</html>
